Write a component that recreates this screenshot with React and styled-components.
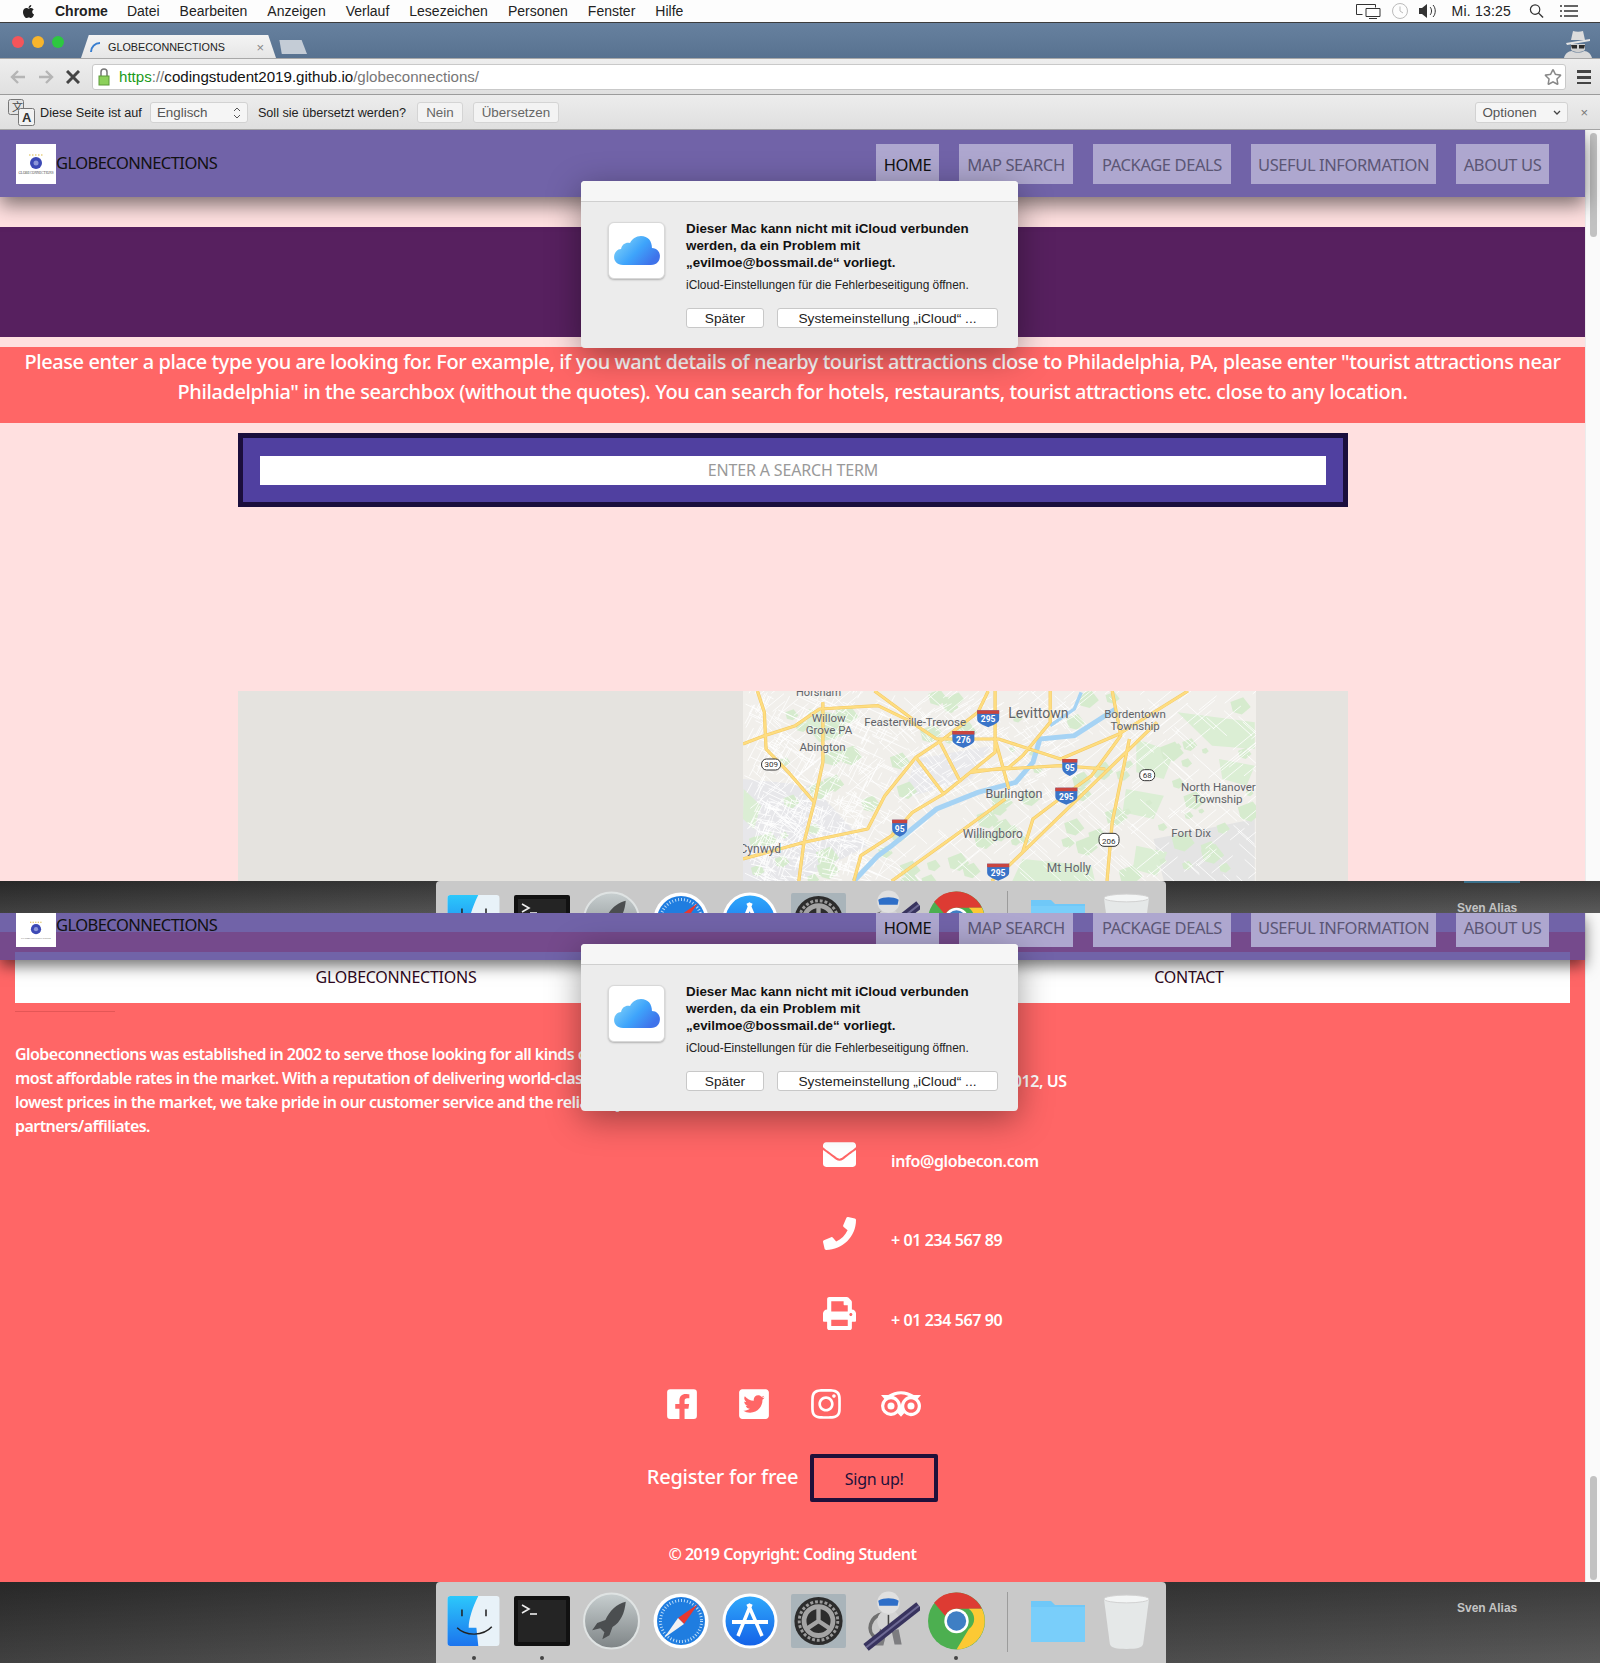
import React from 'react';
import styled, { createGlobalStyle } from 'styled-components';
import {
  FaApple, FaEnvelope, FaPhone, FaPrint, FaFacebookSquare, FaTwitterSquare,
  FaInstagram, FaTripadvisor, FaRegStar, FaHome,
} from 'react-icons/fa';

const GlobalStyle = createGlobalStyle`
  html, body { margin: 0; padding: 0; background: #3a3a3a; }
  * { box-sizing: border-box; }
  body { font-family: "Liberation Sans", Arial, sans-serif; }
`;

const WEB_FONT = `"Noto Sans", "Open Sans", sans-serif`;

const Screen = styled.div`
  width: 1600px;
  height: 1663px;
  display: flex;
  flex-direction: column;
  overflow: hidden;
`;

/* mac menu bar */
const MenuBar = styled.div`
  height: 23px;
  flex: none;
  background: #fdfdfd;
  border-bottom: 1px solid #3c3c3c;
  display: flex;
  align-items: center;
  padding: 0 22px 0 21px;
  font-size: 14px;
  color: #222;
`;
const MenuItems = styled.div`
  display: flex;
  align-items: center;
  gap: 20px;
  flex: 1;
`;
const AppName = styled.span`
  font-weight: 700;
  margin-left: -1px;
  margin-right: -1px;
`;
const StatusItem = styled.div`
  margin-left: ${(p) => p.$gap}px;
  display: flex;
  align-items: center;
  letter-spacing: 0.2px;
`;

/* browser chrome */
const TabStrip = styled.div`
  height: 35px;
  flex: none;
  background: linear-gradient(#67819f, #587290);
  display: flex;
  align-items: flex-end;
  padding-left: 12px;
  position: relative;
`;
const Lights = styled.div`
  display: flex;
  gap: 8px;
  align-self: flex-start;
  margin-top: 13px;
`;
const Light = styled.span`
  width: 12px;
  height: 12px;
  border-radius: 50%;
  background: ${(p) => p.$color};
`;
const Tab = styled.div`
  width: 195px;
  height: 23px;
  margin-left: 17px;
  background: linear-gradient(#f4f4f4, #e6e6e6);
  clip-path: polygon(4% 0, 96% 0, 100% 100%, 0 100%);
  display: flex;
  align-items: center;
  font-size: 10.8px;
  color: #222;
  padding: 1px 12px 0 9px;
`;
const TabTitle = styled.span`
  flex: 1;
  margin-left: 7px;
`;
const TabClose = styled.span`
  color: #888;
  font-size: 13px;
`;
const NewTab = styled.div`
  width: 30px;
  height: 14px;
  margin: 0 0 4px 1px;
  background: #c4ccd6;
  clip-path: polygon(8% 0, 82% 0, 100% 100%, 16% 100%);
`;
const Incognito = styled.div`
  position: absolute;
  right: 7px;
  bottom: 0;
  width: 30px;
  height: 27px;
`;
const Toolbar = styled.div`
  height: 37px;
  flex: none;
  background: linear-gradient(#eeeeee, #e0e0e0);
  border-top: 1px solid #a8a8a8;
  border-bottom: 1px solid #9c9c9c;
  display: flex;
  align-items: center;
  padding: 0 9px 0 10px;
`;
const NavGlyphs = styled.div`
  display: flex;
  align-items: center;
  gap: 12px;
  width: 82px;
`;
const ArrowSvg = styled.svg`
  transform: ${(p) => (p.$flip ? 'scaleX(-1)' : 'none')};
`;
const UrlBox = styled.div`
  flex: 1;
  height: 26px;
  background: #fff;
  border: 1px solid #c9c9c9;
  border-radius: 3px;
  display: flex;
  align-items: center;
  padding: 0 3px 0 5px;
  font-size: 15.1px;
`;
const UrlText = styled.span`
  margin-left: 9px;
  flex: 1;
  color: #777;
`;
const UrlGreen = styled.span`
  color: #1a9a1a;
`;
const UrlHost = styled.span`
  color: #111;
`;
const BurgerBox = styled.div`
  width: 14px;
  margin-left: 11px;
  height: 14px;
  background: repeating-linear-gradient(#444 0 3px, transparent 3px 6px);
`;
const TranslateBar = styled.div`
  height: 35px;
  flex: none;
  background: linear-gradient(#ededed, #dfdfdf);
  border-bottom: 1px solid #a4a4a4;
  display: flex;
  align-items: center;
  padding: 1px 12px 0 8px;
  font-size: 12.65px;
  color: #222;
`;
const BarText = styled.span`
  margin: 0 ${(p) => p.$right || 8}px 0 ${(p) => p.$left || 0}px;
  white-space: nowrap;
`;
const BarSelect = styled.div`
  width: ${(p) => p.$w}px;
  height: 21px;
  background: #f5f5f5;
  border: 1px solid #d2d2d2;
  border-radius: 3px;
  color: #555;
  font-size: 13.4px;
  display: flex;
  align-items: center;
  justify-content: space-between;
  padding: 0 6px;
`;
const BarButton = styled.div`
  height: 21px;
  padding: 0 8px;
  background: #f3f3f3;
  border: 1px solid #d4d4d4;
  border-radius: 3px;
  color: #666;
  font-size: 13.4px;
  display: flex;
  align-items: center;
  margin-right: 10px;
`;
const BarSpacer = styled.div`
  flex: 1;
`;
const BarClose = styled.span`
  color: #777;
  font-size: 13px;
  margin-left: 12px;
`;

/* site page */
const PageRow = styled.div`
  height: ${(p) => p.$h}px;
  flex: none;
  display: flex;
  position: relative;
  overflow: hidden;
`;
const Site = styled.div`
  width: 1585px;
  flex: none;
  background: ${(p) => p.$bg};
  font-family: ${WEB_FONT};
`;
const Scrollbar = styled.div`
  flex: 1;
  background: #fafafa;
  border-left: 1px solid #ececec;
  display: flex;
  flex-direction: column;
  justify-content: ${(p) => (p.$end ? 'flex-end' : 'flex-start')};
  padding: ${(p) => (p.$end ? '0 3px 2px 4px' : '3px 3px 0 4px')};
`;
const Thumb = styled.div`
  height: ${(p) => p.$h}px;
  background: #c2c2c2;
  border-radius: 4px;
`;
const TopNav = styled.div`
  height: 67px;
  background: #7163a8;
  box-shadow: 0 8px 18px rgba(0, 0, 0, 0.5);
  display: flex;
  align-items: flex-start;
  padding: 14px 36px 0 16px;
  position: relative;
`;
const FixedNav = styled.div`
  height: 47px;
  background:
    linear-gradient(#7163a8, #7163a8) top left / 100% 19px no-repeat,
    linear-gradient(#7163a8, #7163a8) left 15px bottom / 1555px 8px no-repeat,
    #754a8c;
  box-shadow: 0 6px 14px rgba(0, 0, 0, 0.55);
  display: flex;
  align-items: flex-start;
  padding: 0 36px 0 16px;
  position: relative;
`;
const Logo = styled.div`
  width: 40px;
  height: ${(p) => p.$h}px;
  background: #fff;
  flex: none;
`;
const Brand = styled.div`
  font-size: 16.5px;
  color: #111;
  margin-top: ${(p) => p.$top}px;
  flex: 1;
  letter-spacing: -0.55px;
  line-height: 20px;
`;
const NavItems = styled.div`
  display: flex;
  gap: 20px;
`;
const NavItem = styled.div`
  width: ${(p) => p.$w}px;
  height: ${(p) => p.$h}px;
  background: #aea7cf;
  color: ${(p) => (p.$active ? '#111' : '#5b5675')};
  padding-bottom: ${(p) => p.$lift}px;
  font-size: 16.5px;
  letter-spacing: -0.4px;
  display: flex;
  align-items: center;
  justify-content: center;
  white-space: nowrap;
`;
const Band = styled.div`
  height: 110px;
  margin-top: 30px;
  background: #57205f;
`;
const Notice = styled.div`
  margin-top: 10px;
  height: 76px;
  background: #ff6666;
  color: #fff;
  font-size: 20px;
  line-height: 30px;
  font-weight: 500;
  text-align: center;
  letter-spacing: -0.43px;
  white-space: nowrap;
`;
const SearchBox = styled.div`
  margin: 10px 237px 0 238px;
  height: 74px;
  background: #5040a0;
  border: 5px solid #1b0e3c;
  padding: 18px 17px 0;
`;
const SearchInput = styled.div`
  height: 29px;
  background: #fff;
  color: #999;
  font-size: 16px;
  letter-spacing: -0.17px;
  padding-bottom: 2px;
  display: flex;
  align-items: center;
  justify-content: center;
`;
const MapFrame = styled.div`
  margin: 184px 237px 0 238px;
  height: 190px;
  background: #e5e3df;
  padding-left: 505px;
  padding-right: 92px;
`;
const MapSvg = styled.svg`
  display: block;
`;
const Dialog = styled.div`
  position: absolute;
  left: 581px;
  top: ${(p) => p.$top}px;
  width: 437px;
  height: 167px;
  background: #ececec;
  border-radius: 4px;
  box-shadow: 0 8px 34px rgba(0, 0, 0, 0.38);
  overflow: hidden;
  z-index: 3;
`;
const DialogHead = styled.div`
  height: 21px;
  background: #f6f6f6;
  border-bottom: 1px solid #cfcfcf;
`;
const DialogBody = styled.div`
  display: flex;
  padding: 20px 21px 0 27px;
  gap: 21px;
`;
const IconTile = styled.div`
  width: 57px;
  height: 57px;
  flex: none;
  background: #fff;
  border: 1px solid #d8d8d8;
  border-radius: 6px;
  box-shadow: 0 1px 2px rgba(0, 0, 0, 0.25);
  display: flex;
  align-items: center;
  justify-content: center;
`;
const DialogMain = styled.div`
  flex: 1;
  margin-top: -2px;
  white-space: nowrap;
`;
const DialogTitle = styled.div`
  font-size: 13.4px;
  line-height: 17px;
  font-weight: 700;
  color: #111;
`;
const DialogNote = styled.div`
  font-size: 11.9px;
  line-height: 14px;
  color: #222;
  margin-top: 7px;
`;
const DialogActions = styled.div`
  display: flex;
  gap: 13px;
  margin-top: 16px;
`;
const DialogButton = styled.div`
  width: ${(p) => p.$w}px;
  height: 20px;
  background: #fff;
  border: 1px solid #c8c8c8;
  border-radius: 3px;
  font-size: 13.7px;
  color: #222;
  display: flex;
  align-items: center;
  justify-content: center;
`;

/* desktop strips */
const Desktop = styled.div`
  height: ${(p) => p.$h}px;
  flex: none;
  position: relative;
  overflow: hidden;
  background: linear-gradient(90deg, #353535, #4a4a4a 30%, #3c3c3c 60%, #505050);
  padding-left: 436px;
`;
const DesktopShade = styled.div`
  position: absolute;
  inset: 0;
  background: linear-gradient(rgba(0, 0, 0, 0.25), rgba(255, 255, 255, 0.06));
`;
const Dock = styled.div`
  width: 730px;
  height: 81px;
  background: #c9c9c9;
  border-radius: 4px 4px 0 0;
  display: flex;
  align-items: flex-start;
  padding: 9px 0 0 4px;
  position: relative;
  z-index: 1;
`;
const DockSlot = styled.div`
  width: ${(p) => p.$w}px;
  flex: none;
  display: flex;
  flex-direction: column;
  align-items: center;
  gap: 5px;
`;
const DockWell = styled.div`
  height: 60px;
  display: flex;
  align-items: center;
  justify-content: center;
`;
const DockDot = styled.span`
  width: 4px;
  height: 4px;
  border-radius: 50%;
  background: ${(p) => (p.$on ? '#444' : 'transparent')};
`;
const DockRule = styled.div`
  width: 1px;
  height: 60px;
  background: #9c9c9c;
  margin: 1px 12px 0 24px;
`;
const DesktopLabel = styled.div`
  position: absolute;
  left: 1457px;
  top: ${(p) => p.$top}px;
  color: #c4c4c4;
  font-size: 12px;
  font-weight: 700;
  z-index: 1;
`;
const DesktopFolder = styled.div`
  position: absolute;
  left: 1464px;
  top: 0;
  width: 56px;
  height: 2px;
  background: #3a6f8a;
`;

/* footer */
const FooterHead = styled.div`
  margin: 0 15px;
  height: 43px;
  background: #fff;
  display: grid;
  grid-template-columns: 762px 1fr;
  column-gap: 31px;
  color: #2e0820;
  font-size: 16px;
  letter-spacing: -0.25px;
  padding-top: 6px;
  text-align: center;
`;
const Columns = styled.div`
  display: grid;
  grid-template-columns: 777px 1fr;
  height: 384px;
`;
const AboutColumn = styled.div`
  padding: 8px 0 0 15px;
  color: #fff;
`;
const ShortRule = styled.div`
  width: 100px;
  height: 1px;
  background: #e45656;
`;
const AboutText = styled.p`
  margin: 30px 0 0;
  font-size: 16px;
  line-height: 24px;
  font-weight: 600;
  white-space: nowrap;
  letter-spacing: -0.55px;
  overflow: hidden;
`;
const ContactColumn = styled.div`
  padding: 67px 0 0 46px;
  color: #fff;
`;
const ContactRow = styled.div`
  height: 79.7px;
  display: flex;
  align-items: flex-start;
  font-size: 16px;
  font-weight: 600;
  letter-spacing: -0.4px;
`;
const ContactIcon = styled.div`
  width: 68px;
  flex: none;
  font-size: 33px;
  height: 33px;
  display: flex;
  margin-top: -12px;
`;
const Socials = styled.div`
  display: flex;
  justify-content: center;
  align-items: center;
  gap: 38px;
  color: #fff;
  font-size: 34px;
  height: 34px;
`;
const RegisterRow = styled.div`
  display: flex;
  justify-content: center;
  align-items: center;
  gap: 12px;
  margin-top: 33px;
  color: #fff;
  font-size: 20px;
  font-weight: 500;
  letter-spacing: -0.25px;
`;
const RegisterLabel = styled.span`
  padding-bottom: 4px;
`;
const SignUp = styled.div`
  width: 128px;
  height: 48px;
  border: 4px solid #20103a;
  border-radius: 2px;
  color: #20103a;
  font-size: 16px;
  font-weight: 400;
  display: flex;
  align-items: center;
  justify-content: center;
  padding-top: 1px;
`;
const Copyright = styled.div`
  margin-top: 41px;
  text-align: center;
  color: #fff;
  font-size: 16px;
  font-weight: 600;
  letter-spacing: -0.5px;
`;

const Arrow = ({ flip }) => (
  <ArrowSvg $flip={flip} width="16" height="14" viewBox="0 0 16 14">
    <path d="M8 1 2 7l6 6M2 7h13" fill="none" stroke="#b5b5b5" strokeWidth="2.4" />
  </ArrowSvg>
);

const Cloud = ({ size = 46 }) => (
  <svg width={size} height={size * 0.65} viewBox="0 0 46 30">
    <defs>
      <linearGradient id="cloudFill" x1="0" x2="1" y1="0" y2="0.6">
        <stop offset="0" stopColor="#8fdcf8" />
        <stop offset="0.6" stopColor="#3ea4fb" />
        <stop offset="1" stopColor="#3f73ea" />
      </linearGradient>
    </defs>
    <path d="M9 29C3 29 0 25 0 21s3-8 7-8c1-5 5-7 9-6 2-4 6-7 11-7 7 0 11 5 11 12 5 0 8 4 8 8 0 5-3 9-9 9Z" fill="url(#cloudFill)" />
  </svg>
);

const LogoMark = ({ h }) => (
  <Logo $h={h}>
    <svg width="40" height={h} viewBox="0 0 40 40">
      <circle cx="20" cy="19" r="6" fill="#3c49b5" />
      <circle cx="20" cy="19" r="2.5" fill="#8d96d8" />
      <path d="M13 11h14" stroke="#d9b94a" strokeWidth="1.2" strokeDasharray="1.5 1.5" />
      <text x="20" y="30" textAnchor="middle" fontSize="3.4" fill="#444" fontFamily="Liberation Serif, serif">GLOBECONNECTIONS</text>
    </svg>
  </Logo>
);

// finder, terminal and the rest of the dock
const DockIcons = {
  finder: (
    <svg width="53" height="50" viewBox="0 0 54 52">
      <defs>
        <linearGradient id="finderBlue" x1="0" x2="0" y1="0" y2="1">
          <stop offset="0" stopColor="#2cc8fb" />
          <stop offset="1" stopColor="#1b74ee" />
        </linearGradient>
      </defs>
      <rect width="54" height="52" rx="3" fill="#e8f2f8" />
      <path d="M3 0h29c-6 12-10 24-10 33h8l2 19H3a3 3 0 0 1-3-3V3a3 3 0 0 1 3-3Z" fill="url(#finderBlue)" />
      <path d="M15 14v7M40 14v7" stroke="#222" strokeWidth="1.6" />
      <path d="M10 33c9 9 27 9 36-1" fill="none" stroke="#222" strokeWidth="1.5" />
    </svg>
  ),
  terminal: (
    <svg width="56" height="50" viewBox="0 0 56 50">
      <rect width="56" height="50" rx="2" fill="#111" />
      <rect x="4" y="4" width="48" height="42" fill="#242424" />
      <path d="m8 9 7 4-7 4" fill="none" stroke="#eee" strokeWidth="1.6" />
      <path d="M16 18h7" stroke="#eee" strokeWidth="1.6" />
    </svg>
  ),
  launchpad: (
    <svg width="57" height="58" viewBox="0 0 56 56">
      <defs>
        <linearGradient id="padFill" x1="0" x2="0" y1="0" y2="1">
          <stop offset="0" stopColor="#c8cfd0" />
          <stop offset="1" stopColor="#7e8486" />
        </linearGradient>
      </defs>
      <circle cx="28" cy="28" r="27" fill="url(#padFill)" stroke="#dfe3e3" strokeWidth="2" />
      <path d="M42 9c-9 2-16 9-20 18l-8 3-5 7 8-2 4 4-2 7 7-4 3-8c8-5 12-14 13-25Z" fill="#4b4e50" />
    </svg>
  ),
  safari: (
    <svg width="56" height="58" viewBox="0 0 56 56">
      <circle cx="28" cy="28" r="27.500" fill="#fff" />
      <circle cx="28" cy="28" r="24" fill="#1f7de0" />
      <circle cx="28" cy="28" r="20.500" fill="none" stroke="#bcdcf8" strokeWidth="3" strokeDasharray="1 2" />
      <path d="M45 11 25 25l6 6Z" fill="#e8382f" />
      <path d="M11 45 25 25l6 6Z" fill="#f2f2f2" />
    </svg>
  ),
  store: (
    <svg width="56" height="58" viewBox="0 0 56 56">
      <defs>
        <linearGradient id="storeFill" x1="0" x2="0" y1="0" y2="1">
          <stop offset="0" stopColor="#2fa8fb" />
          <stop offset="1" stopColor="#1462e8" />
        </linearGradient>
      </defs>
      <circle cx="28" cy="28" r="27.500" fill="#fff" />
      <circle cx="28" cy="28" r="24.500" fill="url(#storeFill)" />
      <path d="M29 11 16 43M26 11l14 32" fill="none" stroke="#fff" strokeWidth="3.500" />
      <path d="M10 29h36" stroke="#fff" strokeWidth="4" />
    </svg>
  ),
  prefs: (
    <svg width="57" height="54" viewBox="0 0 57 56">
      <rect width="57" height="56" rx="2" fill="#a9b4ba" />
      <circle cx="28.500" cy="28" r="25" fill="#2c2c2c" />
      <circle cx="28.500" cy="28" r="20" fill="none" stroke="#9a9a9a" strokeWidth="3" strokeDasharray="3 2" />
      <circle cx="28.500" cy="28" r="15" fill="none" stroke="#a4a4a4" strokeWidth="5" />
      <path d="M28.500 28V13M28.500 28 15 37M28.500 28 42 37" stroke="#a4a4a4" strokeWidth="4.500" />
    </svg>
  ),
  automator: (
    <svg width="57" height="60" viewBox="0 0 56 58">
      <path d="M20 22c-13 2-18 17-7 24l7 4" fill="none" stroke="#6f6f6f" strokeWidth="3.500" />
      <path d="M17 36 12 53h8l3-12M28 38l3 14h7l-3-15" fill="#7d7d80" />
      <circle cx="25" cy="29" r="11" fill="#d4d4d4" />
      <path d="M25 23v13" stroke="#444" strokeWidth="1.500" />
      <circle cx="25" cy="11" r="11" fill="#e0e0e0" />
      <path d="M15 9c6-3 14-3 20 0l-1 5H16Z" fill="#2f6fc8" />
      <path d="M3 55 55 14" stroke="#38335e" strokeWidth="8.500" />
      <path d="M3 55 55 14" stroke="#6d6994" strokeWidth="2" />
    </svg>
  ),
  chrome: (
    <svg width="57" height="58" viewBox="0 0 56 56">
      <circle cx="28" cy="28" r="28" fill="#4caf50" />
      <path d="M28 0a28 28 0 0 1 25 16H28a12 12 0 0 0-11 7L6 10A28 28 0 0 1 28 0Z" fill="#dd3b33" />
      <path d="M53 16a28 28 0 0 1-25 40l12-20a12 12 0 0 0 0-20Z" fill="#fcc934" />
      <circle cx="28" cy="28" r="12" fill="#fff" />
      <circle cx="28" cy="28" r="9.500" fill="#3f7fc4" />
    </svg>
  ),
  folder: (
    <svg width="56" height="44" viewBox="0 0 56 44">
      <path d="M1 2h20l4 4h30v37H1Z" fill="#6fc8f8" />
      <rect x="1" y="8" width="54" height="35" fill="#79cefa" />
    </svg>
  ),
  trash: (
    <svg width="47" height="57" viewBox="0 0 48 56">
      <path d="M1 5h46l-6 46c-1 4-7 5-17 5S8 55 7 51Z" fill="#e5e8e8" />
      <ellipse cx="24" cy="5" rx="23" ry="4" fill="#f3f5f5" stroke="#d0d0d0" />
    </svg>
  ),
};

const dockApps = [
  { key: 'finder', w: 67, on: true },
  { key: 'terminal', w: 70, on: true },
  { key: 'launchpad', w: 68 },
  { key: 'safari', w: 71 },
  { key: 'store', w: 68 },
  { key: 'prefs', w: 69 },
  { key: 'automator', w: 76 },
  { key: 'chrome', w: 54, on: true },
];

const DockItem = ({ app }) => (
  <DockSlot $w={app.w}>
    <DockWell>{DockIcons[app.key]}</DockWell>
    <DockDot $on={app.on} />
  </DockSlot>
);

const DockBar = () => (
  <Dock>
    {dockApps.map((app) => <DockItem key={app.key} app={app} />)}
    <DockRule />
    <DockItem app={{ key: 'folder', w: 76 }} />
    <DockItem app={{ key: 'trash', w: 60 }} />
  </Dock>
);

// map coords below were read off a zoomed crop, zx/zy map back to tile pixels
const zx = (x) => x / 2.904 - 13.1;
const zy = (y) => y / 3 - 12;

const MAJOR_ROADS = [
  'M38 195 100 170 190 140 260 90 430 80 520 125 600 180 780 180 960 240 1130 165 1330 36',
  'M80 36 100 100 105 210 170 280 245 370 215 490 200 606',
  'M270 70 270 250 245 370',
  'M420 36 530 120',
  'M750 36 720 100 620 180 540 235 450 350 400 450 215 490 38 540',
  'M540 235 610 330 620 345M610 190 670 310',
  'M770 180 770 220 620 345 530 400 470 470 380 530 360 606',
  'M770 36 770 180 810 330',
  'M710 275 960 260 1090 270',
  'M930 36 930 130 850 230 810 265 700 280',
  'M1110 36 1135 170 1050 290 950 365 880 420 850 520 810 560 760 606',
  'M1240 130 950 420 810 560',
  'M1160 180 1110 430 1095 606',
  'M800 360 640 480 470 606',
];

// deterministic so every render gives the same map
const seeded = (start) => {
  let seed = start;
  return () => {
    seed = (seed * 9301 + 49297) % 233280;
    return seed / 233280;
  };
};

const minorStreets = () => {
  const rnd = seeded(17);
  const out = [];
  const add = (count, minX, rangeX, minY, rangeY, minLen, rangeLen, a1, a2) => {
    for (let i = 0; i < count; i++) {
      const x = minX + rnd() * rangeX;
      const y = minY + rnd() * rangeY;
      const len = minLen + rnd() * rangeLen;
      const a = rnd() > 0.5 ? a1 : a2;
      out.push(`M${x} ${y}L${x + len * Math.cos(a)} ${y + len * Math.sin(a)}`);
    }
  };
  add(380, 38, 1486, 36, 570, 40, 110, 0.75, -0.7);
  add(340, 40, 420, 40, 566, 20, 60, 0.45, -1.1);
  add(240, 60, 320, 360, 246, 12, 35, 0.2, -1.3);
  add(200, 480, 500, 80, 300, 20, 50, 0.9, -0.5);
  return out.join('');
};

const greenPatches = () => {
  const rnd = seeded(91);
  const out = [];
  for (let i = 0; i < 90; i++) {
    const x = 40 + rnd() * 1480;
    const y = 40 + rnd() * 560;
    const s = 10 + rnd() * 34;
    out.push(`M${x} ${y}l${s} ${-s * 0.4} ${s * 0.6} ${s * 0.8} ${-s * 0.7} ${s * 0.6} ${-s * 0.7} ${-s * 0.2}Z`);
  }
  return out.join('');
};

const GREENS = [
  'M230 90 340 110 330 170 260 190 220 140Z',
  'M40 330 90 380 70 450 38 420Z',
  'M1180 180 1290 220 1260 300 1180 280Z',
  'M1300 100 1524 130 1524 210 1400 200Z',
  'M1420 240 1524 260 1500 320 1430 300Z',
  'M1150 330 1260 350 1230 420 1140 400Z',
  'M850 540 1050 560 1060 606 820 606Z',
  'M1180 500 1270 520 1240 590 1170 570Z',
];

const Shield = ({ x, y, n, w = 22 }) => (
  <g transform={`translate(${zx(x) - w / 2} ${zy(y) - 8})`}>
    <path d={`M0 0h${w}v9c0 4-${w / 2 - 4} 6-${w / 2} 8c-4-2-${w / 2} -4-${w / 2} -8Z`} fill="#3a74c8" />
    <rect width={w} height="3.5" fill="#c9453f" />
    <text x={w / 2} y="12" textAnchor="middle" fontSize="8.5" fontWeight="700" fill="#fff" fontFamily="Roboto, sans-serif">{n}</text>
  </g>
);

const MapLabel = ({ x, y, size = 11, children }) => (
  <text x={zx(x)} y={zy(y)} fontSize={size} fill="#5f6368" fontFamily="Roboto, sans-serif" stroke="#f5f3ef" strokeWidth="0.4" paintOrder="stroke">{children}</text>
);

const MapTiles = () => (
  <MapSvg width="513" height="190" viewBox="0 0 513 190">
    <rect width="513" height="190" fill="#f1efeb" />
    <g transform="translate(-13.1 -12) scale(.3444 .3333)">
      <path d="M38 300 240 320 400 500 200 606 38 606Z" fill="#e7e7ea" />
      <path d="M540 240 760 200 700 300 500 360Z" fill="#e9e9ec" />
      <path d="M1230 480 1524 420 1524 606 1260 606Z" fill="#e4e4e4" />
      {GREENS.map((d) => <path key={d} d={d} fill="#dbeed4" />)}
      <path d={greenPatches()} fill="#d6ebce" />
      <path d={minorStreets()} fill="none" stroke="#fff" strokeWidth="2.4" />
      <path d="M360 606 430 530 470 500 600 390 720 340 830 310 880 250 900 180 1000 170 1120 90" fill="none" stroke="#a6d3f4" strokeWidth="15" />
      <path d="M930 140 1000 90 1020 40" fill="none" stroke="#a6d3f4" strokeWidth="10" />
      <path d={MAJOR_ROADS.join('')} fill="none" stroke="#f3c964" strokeWidth="9.500" strokeLinejoin="round" />
      <path d={MAJOR_ROADS.join('')} fill="none" stroke="#fedd80" strokeWidth="6.500" strokeLinejoin="round" />
    </g>
    <MapLabel x={192} y={50} size={11}>Horsham</MapLabel>
    <MapLabel x={238} y={128} size={11.5}>Willow</MapLabel>
    <MapLabel x={220} y={164} size={11.5}>Grove PA</MapLabel>
    <MapLabel x={202} y={216} size={11.5}>Abington</MapLabel>
    <MapLabel x={390} y={140} size={11.5}>Feasterville-Trevose</MapLabel>
    <MapLabel x={808} y={118} size={14}>Levittown</MapLabel>
    <MapLabel x={1087} y={116} size={11.5}>Bordentown</MapLabel>
    <MapLabel x={1105} y={152} size={11.5}>Township</MapLabel>
    <MapLabel x={742} y={356} size={12.5}>Burlington</MapLabel>
    <MapLabel x={1310} y={335} size={11.5}>North Hanover</MapLabel>
    <MapLabel x={1345} y={371} size={11.5}>Township</MapLabel>
    <MapLabel x={1282} y={473} size={11.5}>Fort Dix</MapLabel>
    <MapLabel x={676} y={476} size={12}>Willingboro</MapLabel>
    <MapLabel x={28} y={521} size={12}>Cynwyd</MapLabel>
    <MapLabel x={920} y={578} size={12}>Mt Holly</MapLabel>
    <Shield x={750} y={118} n="295" />
    <Shield x={678} y={180} n="276" />
    <Shield x={987} y={264} n="95" w={15} />
    <Shield x={977} y={350} n="295" />
    <Shield x={493} y={446} n="95" w={15} />
    <Shield x={779} y={578} n="295" />
    <g fontSize="8" fill="#333" fontFamily="Roboto, sans-serif" textAnchor="middle">
      <rect x={zx(92)} y={zy(240)} width="19" height="11" rx="5" fill="#fff" stroke="#333" />
      <text x={zx(120)} y={zy(264)}>309</text>
      <rect x={zx(1190)} y={zy(272)} width="15" height="11" rx="5" fill="#fff" stroke="#333" />
      <text x={zx(1212)} y={zy(296)}>68</text>
      <rect x={zx(1072)} y={zy(463)} width="20" height="13" rx="5" fill="#fff" stroke="#333" />
      <text x={zx(1100)} y={zy(494)}>206</text>
    </g>
  </MapSvg>
);

const ICloudDialog = ({ top }) => (
  <Dialog $top={top}>
    <DialogHead />
    <DialogBody>
      <IconTile><Cloud /></IconTile>
      <DialogMain>
        <DialogTitle>
          Dieser Mac kann nicht mit iCloud verbunden<br />
          werden, da ein Problem mit<br />
          „evilmoe@bossmail.de“ vorliegt.
        </DialogTitle>
        <DialogNote>iCloud-Einstellungen für die Fehlerbeseitigung öffnen.</DialogNote>
        <DialogActions>
          <DialogButton $w={78}>Später</DialogButton>
          <DialogButton $w={221}>Systemeinstellung „iCloud“ ...</DialogButton>
        </DialogActions>
      </DialogMain>
    </DialogBody>
  </Dialog>
);

const navLinks = [
  { label: 'MAP SEARCH', w: 114 },
  { label: 'PACKAGE DEALS', w: 138 },
  { label: 'USEFUL INFORMATION', w: 185 },
  { label: 'ABOUT US', w: 93 },
];

const Links = ({ h, lift = 0 }) => (
  <NavItems>
    <NavItem $w={63} $h={h} $lift={lift} $active>HOME</NavItem>
    {navLinks.map((link) => <NavItem key={link.label} $w={link.w} $h={h} $lift={lift}>{link.label}</NavItem>)}
  </NavItems>
);

const App = () => (
  <Screen>
    <GlobalStyle />
    <MenuBar>
      <MenuItems>
        <FaApple size={15} />
        <AppName>Chrome</AppName>
        {['Datei', 'Bearbeiten', 'Anzeigen', 'Verlauf', 'Lesezeichen', 'Personen', 'Fenster', 'Hilfe'].map((m) => (
          <span key={m}>{m}</span>
        ))}
      </MenuItems>
      <StatusItem $gap={0}>
        <svg width="25" height="15" viewBox="0 0 25 15">
          <path d="M.5.5h19v3M.5.5v10h6M10 4.500h14v8H10ZM13 14.500h8" fill="none" stroke="#333" />
        </svg>
      </StatusItem>
      <StatusItem $gap={9}>
        <svg width="18" height="18" viewBox="0 0 18 18">
          <circle cx="10" cy="9" r="7.500" fill="none" stroke="#bbb" />
          <path d="M10 4.500V9l3 2" fill="none" stroke="#bbb" />
        </svg>
      </StatusItem>
      <StatusItem $gap={11}>
        <svg width="18" height="14" viewBox="0 0 18 14">
          <path d="M0 4h3l5-4v14l-5-4H0Z" fill="#333" />
          <path d="M11 3c2 2 2 6 0 8M14 1c3 3 3 9 0 12" fill="none" stroke="#333" />
        </svg>
      </StatusItem>
      <StatusItem $gap={15}>Mi. 13:25</StatusItem>
      <StatusItem $gap={18}>
        <svg width="15" height="16" viewBox="0 0 16 16">
          <circle cx="6.500" cy="6.500" r="5" fill="none" stroke="#333" strokeWidth="1.300" />
          <path d="m10 10 5 5" stroke="#333" strokeWidth="1.500" />
        </svg>
      </StatusItem>
      <StatusItem $gap={16}>
        <svg width="18" height="12" viewBox="0 0 18 12">
          <path d="M0 1h2M4 1h14M0 6h2M4 6h14M0 11h2M4 11h14" stroke="#333" strokeWidth="1.500" />
        </svg>
      </StatusItem>
    </MenuBar>
    <TabStrip>
      <Lights>
        <Light $color="#f4555a" />
        <Light $color="#f8b52c" />
        <Light $color="#2dc840" />
      </Lights>
      <Tab>
        <svg width="11" height="11" viewBox="0 0 11 11">
          <path d="M1 10C1 5 5 1 10 1" fill="none" stroke="#3a7fd0" strokeWidth="2" />
        </svg>
        <TabTitle>GLOBECONNECTIONS</TabTitle>
        <TabClose>×</TabClose>
      </Tab>
      <NewTab />
      <Incognito>
        <svg width="30" height="27" viewBox="0 0 30 27">
          <path d="M8 9 10 0c3 1 7 1 10 0l2 9Z" fill="#dcdcdc" />
          <path d="M3 12 27 8v2L4 14Z" fill="#e4e4e4" />
          <path d="M8 13h14v5c0 2-3 3-7 3s-7-1-7-3Z" fill="#cfcfcf" />
          <path d="M8 14h6v3.500H9ZM16 14h6l-1 3.500h-5Z" fill="#2c2c2c" />
          <path d="M1 27c1-4 4-7 8-7 2 2 10 2 12 0 4 0 7 3 8 7Z" fill="#d9d9d9" />
        </svg>
      </Incognito>
    </TabStrip>
    <Toolbar>
      <NavGlyphs>
        <Arrow />
        <Arrow flip />
        <svg width="14" height="14" viewBox="0 0 14 14">
          <path d="m1 1 12 12M13 1 1 13" stroke="#444" strokeWidth="3" />
        </svg>
      </NavGlyphs>
      <UrlBox>
        <svg width="12" height="18" viewBox="0 0 12 18">
          <path d="M3 8V4a3 3 0 0 1 6 0v4" fill="none" stroke="#777" strokeWidth="1.500" />
          <rect x="1" y="8" width="10" height="9" fill="#8cd05a" stroke="#5c9a38" />
        </svg>
        <UrlText>
          <UrlGreen>https</UrlGreen>://<UrlHost>codingstudent2019.github.io</UrlHost>/globeconnections/
        </UrlText>
        <FaRegStar size={18} color="#888" />
      </UrlBox>
      <BurgerBox />
    </Toolbar>
    <TranslateBar>
      <svg width="27" height="27" viewBox="0 0 27 27">
        <rect x=".5" y=".5" width="15" height="15" rx="2" fill="#e4e4e4" stroke="#777" />
        <text x="4" y="12" fontSize="11" fill="#444" fontFamily="Noto Sans CJK SC, sans-serif">文</text>
        <rect x="10.500" y="9.500" width="16" height="17" rx="2" fill="#f2f2f2" stroke="#777" />
        <text x="14" y="23" fontSize="13" fontWeight="700" fill="#333">A</text>
      </svg>
      <BarText $left={5}>Diese Seite ist auf</BarText>
      <BarSelect $w={98}>
        Englisch
        <svg width="8" height="14" viewBox="0 0 8 14">
          <path d="m1 5 3-3 3 3M1 9l3 3 3-3" fill="none" stroke="#555" />
        </svg>
      </BarSelect>
      <BarText $left={10} $right={11}>Soll sie übersetzt werden?</BarText>
      <BarButton>Nein</BarButton>
      <BarButton>Übersetzen</BarButton>
      <BarSpacer />
      <BarSelect $w={93}>
        Optionen
        <svg width="8" height="6" viewBox="0 0 8 6">
          <path d="m1 1 3 3 3-3" fill="none" stroke="#444" strokeWidth="1.300" />
        </svg>
      </BarSelect>
      <BarClose>×</BarClose>
    </TranslateBar>
    <PageRow $h={751}>
      <Site $bg="#ffe0e0">
        <TopNav>
          <LogoMark h={40} />
          <Brand $top={9}>GLOBECONNECTIONS</Brand>
          <Links h={40} />
        </TopNav>
        <Band />
        <Notice>
          Please enter a place type you are looking for. For example, if you want details of nearby tourist attractions close to Philadelphia, PA, please enter "tourist attractions near<br />
          Philadelphia" in the searchbox (without the quotes). You can search for hotels, restaurants, tourist attractions etc. close to any location.
        </Notice>
        <SearchBox>
          <SearchInput>ENTER A SEARCH TERM</SearchInput>
        </SearchBox>
        <MapFrame>
          <MapTiles />
        </MapFrame>
      </Site>
      <Scrollbar>
        <Thumb $h={104} />
      </Scrollbar>
      <ICloudDialog top={51} />
    </PageRow>
    <Desktop $h={32}>
      <DesktopShade />
      <DesktopFolder />
      <DockBar />
      <DesktopLabel $top={20}>Sven Alias</DesktopLabel>
    </Desktop>
    <PageRow $h={669}>
      <Site $bg="#ff6666">
        <FixedNav>
          <LogoMark h={34} />
          <Brand $top={2}>GLOBECONNECTIONS</Brand>
          <Links h={34} lift={6} />
        </FixedNav>
        <FooterHead>
          <span>GLOBECONNECTIONS</span>
          <span>CONTACT</span>
        </FooterHead>
        <Columns>
          <AboutColumn>
            <ShortRule />
            <AboutText>
              Globeconnections was established in 2002 to serve those looking for all kinds of travel at the<br />
              most affordable rates in the market. With a reputation of delivering world-class service at the<br />
              lowest prices in the market, we take pride in our customer service and the reliability of our<br />
              partners/affiliates.
            </AboutText>
          </AboutColumn>
          <ContactColumn>
            <ContactRow><ContactIcon><FaHome /></ContactIcon>New York, NY 10012, US</ContactRow>
            <ContactRow><ContactIcon><FaEnvelope /></ContactIcon>info@globecon.com</ContactRow>
            <ContactRow><ContactIcon><FaPhone /></ContactIcon>+ 01 234 567 89</ContactRow>
            <ContactRow><ContactIcon><FaPrint /></ContactIcon>+ 01 234 567 90</ContactRow>
          </ContactColumn>
        </Columns>
        <Socials>
          <FaFacebookSquare />
          <FaTwitterSquare />
          <FaInstagram />
          <FaTripadvisor size={40} />
        </Socials>
        <RegisterRow>
          <RegisterLabel>Register for free</RegisterLabel>
          <SignUp>Sign up!</SignUp>
        </RegisterRow>
        <Copyright>© 2019 Copyright: Coding Student</Copyright>
      </Site>
      <Scrollbar $end>
        <Thumb $h={104} />
      </Scrollbar>
      <ICloudDialog top={31} />
    </PageRow>
    <Desktop $h={81}>
      <DesktopShade />
      <DockBar />
      <DesktopLabel $top={19}>Sven Alias</DesktopLabel>
    </Desktop>
  </Screen>
);

export default App;
